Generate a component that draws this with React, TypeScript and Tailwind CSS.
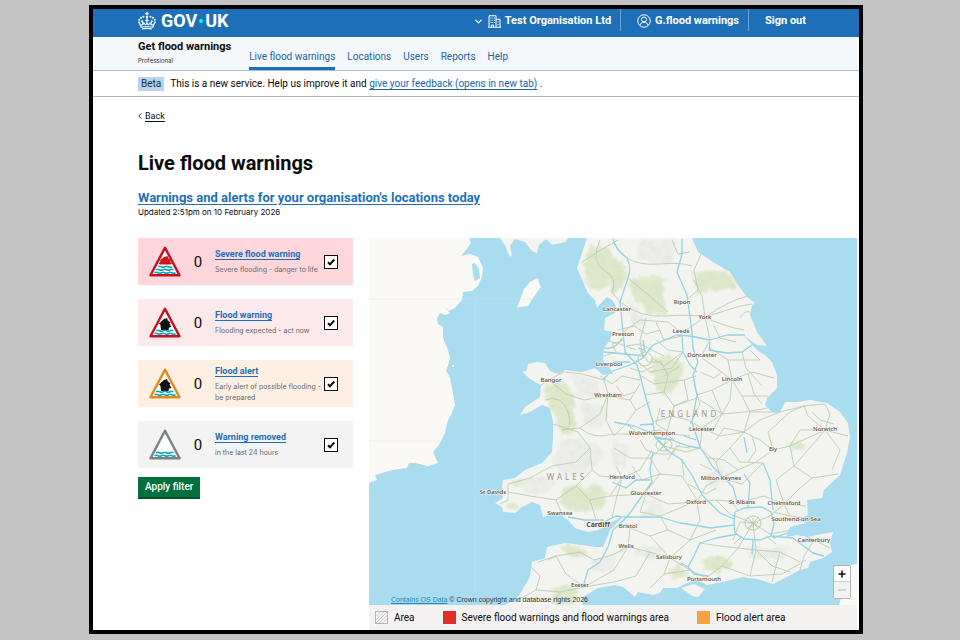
import { useState } from 'react'
import { ChevronDown, ChevronLeft } from 'lucide-react'

type Level = 'severe' | 'warning' | 'alert' | 'removed'

interface WarningType {
  id: Level
  title: string
  description: string
  count: number
  background: string
}

const warningTypes: WarningType[] = [
  { id: 'severe', title: 'Severe flood warning', description: 'Severe flooding - danger to life', count: 0, background: 'bg-[#ffd6dc]' },
  { id: 'warning', title: 'Flood warning', description: 'Flooding expected - act now', count: 0, background: 'bg-[#fce9eb]' },
  { id: 'alert', title: 'Flood alert', description: 'Early alert of possible flooding - be prepared', count: 0, background: 'bg-[#fdf0e2]' },
  { id: 'removed', title: 'Warning removed', description: 'in the last 24 hours', count: 0, background: 'bg-[#f3f3f3]' },
]

const navItems = ['Live flood warnings', 'Locations', 'Users', 'Reports', 'Help']

const places: [string, number, number][] = [
  ['Lancaster', 617, 311],
  ['Ripon', 682, 304],
  ['York', 705, 319],
  ['Preston', 623, 336],
  ['Leeds', 681, 333],
  ['Liverpool', 609, 366],
  ['Doncaster', 702, 357],
  ['Bangor', 551, 382],
  ['Wrexham', 608, 397],
  ['Lincoln', 732, 381],
  ['Wolverhampton', 652, 435],
  ['Leicester', 702, 431],
  ['Norwich', 825, 431],
  ['Ely', 773, 451],
  ['Hereford', 622, 479],
  ['Milton Keynes', 721, 480],
  ['St Davids', 493, 494],
  ['Gloucester', 646, 495],
  ['Oxford', 696, 504],
  ['St Albans', 742, 504],
  ['Chelmsford', 784, 505],
  ['Swansea', 560, 515],
  ['Bristol', 628, 528],
  ['Southend-on-Sea', 796, 521],
  ['Canterbury', 814, 542],
  ['Wells', 626, 548],
  ['Salisbury', 669, 559],
  ['Exeter', 580, 587],
  ['Portsmouth', 704, 581],
]

const mainland =
  'M587 238L582 253L577 268L583 282L588 293L595 300L597 308L602 302L607 297L612 300L616 306L615 313L605 318L604 330L612 332L610 340L604 348L603 360L610 368L613 374L603 375L595 368L582 372L565 370L560 374L555 373L550 371L545 363L537 362L528 364L527 370L523 372L529 378L535 382L541 385L540 397L525 407L520 415L530 412L542 405L550 408L553 422L553 437L552 452L542 463L525 470L515 478L503 480L502 490L503 498L495 503L502 507L503 512L515 513L522 507L532 502L540 505L543 517L558 513L568 520L575 528L588 532L598 530L612 522L625 515L617 523L610 530L607 538L603 547L596 547L582 545L565 543L547 547L545 558L532 562L530 577L518 597L505 605L582 605L583 597L598 588L615 585L623 587L635 597L638 592L653 595L660 593L663 588L677 588L687 583L697 580L707 585L723 582L743 577L757 579L773 584L787 577L800 570L808 568L810 562L823 558L832 552L830 543L833 532L817 535L807 537L797 535L786 537L790 527L807 523L795 520L808 515L807 500L822 498L824 490L840 475L847 453L850 437L848 423L840 412L827 403L810 400L797 402L785 402L780 412L773 413L765 405L767 398L777 388L777 375L772 362L765 355L757 350L743 335L757 345L767 346L757 332L750 315L752 305L755 303L747 297L738 285L730 272L713 262L698 252L692 238Z'

const ireland =
  'M369 238H469L471 243L466 250L461 256L470 254L478 257L483 268L482 277L478 286L472 291L463 292L462 300L456 307L449 311L443 305L450 313L446 315L440 313L437 318L438 324L443 327L443 338L448 350L450 358L448 366L446 370L450 378L453 393L455 405L451 415L448 420L445 433L439 445L433 452L438 463L428 466L415 463L409 463L407 468L392 470L375 475L377 480L369 483Z'

const hills =
  'M590 248Q604 241 612 252Q616 270 608 285Q598 294 589 286Q580 268 590 248ZM610 258Q624 258 627 272Q624 292 611 293ZM630 280Q648 273 668 278Q658 286 667 314Q650 318 640 305Q630 298 630 280ZM694 272Q712 268 728 273Q741 284 736 290Q714 288 696 295ZM655 358Q672 352 683 364Q684 382 674 388Q668 398 658 392Q650 374 655 358ZM546 388Q560 378 570 387Q577 398 573 408Q581 424 570 436Q557 434 557 418Q545 404 546 388ZM562 490Q578 480 586 490Q600 480 607 494Q604 512 590 510Q574 516 560 503ZM560 546Q578 542 588 555Q576 559 568 556ZM552 588Q568 580 578 590Q578 602 570 605H552ZM701 560Q716 552 730 560Q738 568 720 571Q704 574 701 560ZM672 566Q684 562 686 576Q676 582 671 576ZM509 482L524 478L520 487ZM506 503L520 504L514 511ZM788 445Q798 434 806 447Q796 454 788 445Z'

const uplands =
  'M640 240H676L672 262Q650 270 638 254ZM628 300Q640 310 646 322L632 326ZM570 375L596 378L600 395L578 398ZM580 402Q600 398 608 416Q600 438 584 424ZM560 440Q590 436 604 450Q600 472 574 476Q548 474 556 452ZM520 480Q542 472 556 482Q550 496 526 494ZM612 440L630 446L624 466L612 464ZM650 500Q662 496 664 512L640 520ZM640 545L664 548L656 560L634 556ZM590 560L616 556L612 572L592 570ZM745 548L790 546L784 560L750 558ZM704 478L722 464L730 476L714 490Z'

const aRoads =
  'M600 240Q590 262 604 270T612 292L620 302M582 262Q600 250 618 240M627 258Q640 266 660 264T692 266M628 278Q650 296 668 312M620 302Q640 318 666 316T705 317M682 304L698 290L694 270L702 252M705 317Q730 300 748 296M705 317L740 306L752 304M705 317Q722 326 744 330M705 317L702 296L694 280M705 317L710 340L702 355M705 317L682 333L668 322L640 320L623 332M646 318L640 340L643 358M656 322L664 340L682 336M672 240L678 254L690 252M740 318Q745 310 750 312M604 340L620 344L636 350M604 356L616 352L612 344L624 340M600 376L612 384L622 376L640 380M565 372L582 374L604 380L608 394M551 382L566 394L584 400L606 396M541 385L556 376L564 372M545 400Q562 394 568 412T562 430L580 428L600 414L608 394L606 420L614 436M553 424L578 432L590 448L576 462L552 466M580 428Q594 440 612 434L640 434M590 448L592 470L600 476L622 478L640 470L652 450M552 466L530 478L508 484L508 500L500 504M508 492L530 496L556 500L576 486L592 470M556 500L562 514M576 486L590 500L596 520M590 500L610 496L622 478L616 500L612 518M610 496L646 494L640 512M636 360L650 372L672 368L683 352M640 375L654 384L684 380L696 376M645 395L664 392L674 406L697 398M653 422L672 416L688 420L702 428M650 402L636 410L630 400L608 396M630 400L640 384M636 410L626 424L640 434M614 436L626 424M664 392L668 376L660 360M656 340L668 350L683 352L664 366L652 358M674 406L668 428L664 446M684 380L688 400L674 406M697 395L712 390L732 380L728 360L710 348M732 380L752 372L774 378M732 380L716 368L702 358M732 380L742 396L768 396M732 380L730 400L722 414L702 428M712 390L722 414M728 360L760 360L750 350M742 352L746 368L762 386M742 396L750 412L744 432M722 414L744 412L768 408M750 412L780 412L804 406L825 404M702 428L720 436L744 432L760 440L773 450L790 446L825 430L848 436M702 428L700 448L686 452L664 446L652 434M664 446L650 458L630 458L614 448M650 458L660 474L646 492M660 474L682 476L697 500M682 460L684 476M697 500L680 508L660 516M646 494L668 504L697 502M697 502L706 486L721 478L738 470L756 462L773 450M697 502L700 520L690 540L670 558M697 502L716 500L742 502L764 496L784 504M721 478L716 462L700 448M716 462L730 448L744 432M721 478L742 484L763 463M730 448L740 462L763 463M744 432L760 420L780 412M773 450L768 432L790 412L804 406M790 446L794 466L812 478L838 474M794 466L776 480L784 504L806 506M794 466L808 450L825 430L840 450L832 470M825 430L830 414L825 404M825 430L808 416L804 406M790 446L800 430L825 430M784 504L798 490L812 478M784 504L790 516L806 518M773 512L790 516M753 523L730 514L716 500M753 523L738 548L722 566M753 523L756 550L750 576M753 523L770 534L792 530L814 540L830 548M753 523L770 516L784 504M753 523L740 522L733 540M738 548L756 550L780 552L800 562M780 552L776 566L772 582M756 550L772 566L790 572M814 540L804 556L800 570M722 566L750 576L782 574L806 560M722 566L706 578L690 570L670 558M700 543L720 546L738 548M670 558L650 552L628 547L612 555L594 560M670 558L664 574L650 588M650 552L636 576L614 582L584 587M628 547L614 570L584 587M670 558L650 536L630 528M650 536L668 530L690 540M628 547L630 528M660 516L668 530M664 574L690 570M690 540L716 530M594 560L580 552L556 556L538 562M584 587L566 574L556 556L548 560M584 587L560 592L536 590L518 600M536 590L540 576L530 566M552 604L560 592M640 512L660 516M708 458L724 460L738 470M700 400L722 414L712 432M690 424L700 404L694 384M616 386L624 396L634 392M660 408L656 424L672 434L690 436M668 460L676 446L690 448M632 466L642 480L660 474M616 466L622 478M716 440L724 428L744 432M748 374L754 394L762 404M664 376L680 366M618 330L634 326L646 334L660 330M626 346L640 344L652 350L664 356M630 368L642 372L654 366M640 440L646 450L658 454L672 454L680 444M646 432L660 430L674 440M738 510L730 500M766 536L776 544M742 536L734 544M688 484L706 494L716 488M700 464L712 470M752 436L756 450L748 462M812 412L820 420L834 424M640 350L648 362L660 362M700 372L714 378L722 372M714 326L720 338L736 342'

const motorways =
  'M613 239Q616 250 627 258Q632 268 628 278L620 302L623 332L625 352L637 365L640 375L645 395L653 422L655 437L665 448M682 239V254L677 272L687 295L692 332L693 348L698 362L693 375L697 395L692 422L700 447L713 467L733 487L738 505M603 380L610 372L630 365L643 358L653 345L677 335L690 336L710 340L727 335L745 335M710 342L709 350L727 353L742 352L752 345M604 348Q616 350 622 338M604 352L625 354L645 356M606 368L614 362L630 362M665 449L682 460L693 477L702 495L720 513L734 519M653 452L650 470L652 482L637 503L627 517L613 530L608 547L600 562L588 570L583 587M604 522L616 516L625 517L660 517L680 523L700 526L710 528L734 525M738 534L716 538L700 543L694 556L688 567L681 563M688 567L694 574L708 576M773 510L770 480L763 463M744 437L747 453M772 536L793 538L813 553L824 556M753 540L752 554M748 507L750 483L744 474M682 335L683 352L690 365L697 372M638 348L645 350M643 340L645 352M568 517L585 520L604 520M612 482L626 488L636 480L650 480M655 437L672 440L688 446L700 448M640 425L654 424M614 422L634 426L654 434M684 436L696 440M770 534L774 538L790 532M735 512L744 508L762 507L771 512L774 524L771 536L760 540L744 539L735 533L734 522Z'

function FloodMap() {
  return (
    <svg viewBox="369 238 488 367" className="block h-auto w-full bg-[#a9dcef] font-['Noto_Sans',sans-serif]" role="img" aria-label="Map of flood warnings in England">
      <defs>
        <filter id="terrain" x="-5%" y="-5%" width="110%" height="110%">
          <feTurbulence type="fractalNoise" baseFrequency="0.18" numOctaves="3" seed="4" result="noise" />
          <feDisplacementMap in="SourceGraphic" in2="noise" scale="11" xChannelSelector="R" yChannelSelector="G" result="rough" />
          <feGaussianBlur in="rough" stdDeviation="0.9" />
        </filter>
        <filter id="relief">
          <feTurbulence type="fractalNoise" baseFrequency="0.13" numOctaves="3" seed="9" />
          <feColorMatrix values="0 0 0 0 0.55  0 0 0 0 0.6  0 0 0 0 0.5  0 1.6 0 0 -0.72" />
        </filter>
        <clipPath id="land">
          <path d={mainland} />
        </clipPath>
        <clipPath id="high-ground">
          <path d={hills + uplands} />
        </clipPath>
      </defs>

      <g fill="#faf9f5">
        <path d={ireland} />
        <path d="M538 278L539 283L541 287L535 295L528 306L520 307L517 308L521 297L524 289L530 282Z" />
        <path d="M839 605L841 598L850 565L857 564V605Z" />
        <circle cx="453" cy="366" r="1" />
      </g>
      <path d="M472 264L475 263L479 269L480 278L475 281L473 275Z" fill="#a9dcef" />
      <g fill="#f3f4ef">
        <path d="M500 238L506 247L508 253L510 257L512 255L510 246L515 239L525 242L532 251L537 253L539 245L546 239L552 245L565 242L568 238Z" />
        <path d={mainland} />
        <path d="M681 588L694 584L705 589L698 597L692 596Z" />
      </g>

      <g clipPath="url(#land)">
        <path d={uplands} fill="#ecede8" filter="url(#terrain)" />
        <path d={hills} fill="#dfe9ca" filter="url(#terrain)" />
        <g clipPath="url(#high-ground)">
          <rect x="369" y="238" width="488" height="367" filter="url(#relief)" opacity="0.3" />
        </g>
        <path d={aRoads} fill="none" stroke="#bccdb3" strokeWidth="0.9" strokeLinejoin="round" />
        <path
          d="M745 523a8 7 0 1 0 16 0a8 7 0 1 0 -16 0M749 523h9M753 518v10M747 517l12 12M759 517l-12 12M638 359a7 7 0 1 0 14 0a7 7 0 1 0 -14 0M656 445a8 6 0 1 0 16 0a8 6 0 1 0 -16 0M660 441l8 9M668 441l-8 9"
          fill="none"
          stroke="#b5ccaa"
          strokeWidth="0.9"
        />
        <path d={motorways} fill="none" stroke="#93d3e4" strokeWidth="1.3" strokeLinejoin="round" />
      </g>

      <path d="M369 299H540M369 441H445M475 292V605" stroke="#d5dad3" strokeWidth="0.5" opacity="0.7" />

      <g fill="#9c958e" fontSize="8" textAnchor="middle" className="tracking-[3px]">
        <text x="690" y="417">ENGLAND</text>
        <text x="567" y="480">WALES</text>
      </g>
      <g fill="#5e4a3c" stroke="#f7f7f2" strokeWidth="1" paintOrder="stroke" fontSize="6" fontWeight="500" textAnchor="middle">
        {places.map(([name, x, y]) => (
          <text key={name} x={x} y={y}>{name}</text>
        ))}
        <text x="598" y="527" fontSize="7" fontWeight="700">Cardiff</text>
      </g>
    </svg>
  )
}

function Crown() {
  return (
    <svg viewBox="0 0 36 36" className="h-[18px] w-[18px]" fill="#fff" aria-hidden="true">
      <path d="M16.800 0h2.400v2.300h2.500v2.400h-2.500V7h-2.400V4.700h-2.500V2.300h2.500z" />
      <circle cx="18" cy="10" r="2.400" />
      <circle cx="11" cy="9.500" r="2" />
      <circle cx="25" cy="9.500" r="2" />
      <circle cx="6" cy="11.500" r="2" />
      <circle cx="30" cy="11.500" r="2" />
      <circle cx="2.500" cy="15.500" r="2" />
      <circle cx="33.500" cy="15.500" r="2" />
      <circle cx="2" cy="20.500" r="1.800" />
      <circle cx="34" cy="20.500" r="1.800" />
      <g fill="none" stroke="#fff" strokeWidth="2.400">
        <path d="M3 22l4 9.500M33 22l-4 9.500M18 12v12M8 17l2.500 7M28 17l-2.500 7" />
        <path d="M5.500 25.500q4 1.500 6.500-3q3 4.500 6 .5q3 4 6-.5q2.500 4.500 6.500 3" />
        <path d="M14.500 17h7M6 18.500h4.500M25.500 18.500H30" />
        <path d="M7 30.500q11-3 22 0M8 34q10-2.500 20 0" />
      </g>
    </svg>
  )
}

function Building() {
  return (
    <svg viewBox="0 0 26 26" className="h-[13px] w-[13px]" fill="none" stroke="#fff" strokeWidth="2" aria-hidden="true">
      <path d="M2 24.500V1.500h14v23M16 8.500h8v16M0 24.500h26M7 24v-4h4v4" />
      <path d="M5 6h2M9 6h1.500M12 6h2M5 10.500h2M9 10.500h1.500M12 10.500h2M5 15h2M9 15h1.500M12 15h2M20 13v2M20 18v2" />
    </svg>
  )
}

function UserBadge() {
  return (
    <svg viewBox="0 0 28 28" className="h-[14px] w-[14px]" fill="none" stroke="#fff" strokeWidth="2" aria-hidden="true">
      <circle cx="14" cy="14" r="12.500" />
      <circle cx="14" cy="11" r="5" />
      <path d="M6 23c1-4.500 4-6.500 8-6.500s7 2 8 6.500" />
    </svg>
  )
}

const outlines: Record<Level, string> = {
  severe: '#c1121f',
  warning: '#c1121f',
  alert: '#e08a1e',
  removed: '#7b8186',
}

function WarningIcon({ level }: { level: Level }) {
  return (
    <svg viewBox="0 0 64 62" className="h-[31px] w-8" aria-hidden="true">
      <path d="M32 3.500L61 58.500H3z" fill="#fff" stroke={outlines[level]} strokeWidth="5" strokeLinejoin="round" />
      {level === 'severe' && (
        <path d="M19 35l4-4-1-3 10-7 2 1 1-2 3 1v3l6 5-2 2 4 4-3 2H22z" fill="#d2101e" />
      )}
      {(level === 'warning' || level === 'alert') && (
        <path d="M20 33l11-10 2 1 1-2 3 1v3l6 5-2 2 4 7-5 1-1 5H24l-1-10z" fill="#111" />
      )}
      {level === 'severe' && (
        <path d="M18 41.500q3.500-2 7 0t7 0t7 0t7 0" fill="none" stroke="#12a5b8" strokeWidth="3" />
      )}
      <path d="M14 47.500q3.500-2 7 0t7 0t7 0t7 0t7 0M11 53.500q3.500-2 7 0t7 0t7 0t7 0t7 0t7 0" fill="none" stroke="#12a5b8" strokeWidth="3.400" />
    </svg>
  )
}

function WarningCard({ item, checked, onChange }: { item: WarningType; checked: boolean; onChange: () => void }) {
  return (
    <div className={`flex min-h-[47px] items-center pr-[15px] pl-[11px] ${item.background}`}>
      <WarningIcon level={item.id} />
      <span className="w-[34px] text-center text-[15px] leading-5">{item.count}</span>
      <div className="min-w-0 flex-1 pt-px">
        <a href="#" className="block w-fit border-b border-[#1d70b8] text-[9px] leading-[10px] font-bold text-[#1d70b8]">
          {item.title}
        </a>
        <p className="mt-1 font-['Inter',sans-serif] text-[7px] leading-[11px] text-[#6b6b6b]">{item.description}</p>
      </div>
      <div className="relative h-[14px] w-[14px] shrink-0">
        <input
          type="checkbox"
          aria-label={item.title}
          checked={checked}
          onChange={onChange}
          className="block h-[14px] w-[14px] appearance-none border border-[#0b0c0c] bg-white"
        />
        {checked && (
          <svg viewBox="0 0 14 14" className="pointer-events-none absolute inset-0" fill="none" stroke="#0b0c0c" strokeWidth="2">
            <path d="M4 7.200L6 9.200L10.300 4.500" />
          </svg>
        )}
      </div>
    </div>
  )
}

export default function App() {
  const [selected, setSelected] = useState<Level[]>(['severe', 'warning', 'alert', 'removed'])

  const toggle = (id: Level) =>
    setSelected((current) => (current.includes(id) ? current.filter((level) => level !== id) : [...current, id]))

  return (
    <div className="min-h-screen bg-[#c4c4c4] pt-[5px] pr-[97px] pb-[6px] pl-[89px] font-['Roboto',sans-serif] text-[#0b0c0c]">
      <div className="border-4 border-black bg-white">
        {/* Header */}
        <header className="flex h-7 items-start justify-between bg-[#1d70b8] pr-[53px] pl-[45px] text-white">
          <a href="#" className="flex items-center gap-[5px] text-[18px] leading-6 font-bold">
            <Crown />
            <span className="flex items-center gap-[2px]">
              GOV
              <span className="h-1 w-1 rounded-full bg-[#00ffe0]" />
              UK
            </span>
          </a>
          <div className="flex text-[11px] font-bold">
            <button type="button" className="flex h-[22px] items-center gap-1 border-r border-[#6ea4d3] pt-[2px] pr-[9px]">
              <ChevronDown className="h-[11px] w-[11px]" strokeWidth={3} />
              <Building />
              Test Organisation Ltd
            </button>
            <a href="#" className="flex h-[22px] items-center gap-1 border-r border-[#6ea4d3] pt-[2px] pr-[9px] pl-4">
              <UserBadge />
              G.flood warnings
            </a>
            <a href="#" className="flex h-[22px] items-center pt-[2px] pl-4">Sign out</a>
          </div>
        </header>

        {/* Service navigation */}
        <div className="flex h-[34px] gap-[18px] border-b border-[#a3bfd6] bg-[#f4f8fb] pl-[45px]">
          <div className="pt-[3px]">
            <p className="text-[11px] leading-[14px] font-bold">Get flood warnings</p>
            <p className="pt-px font-['Inter',sans-serif] text-[6px] leading-3 text-[#333]">Professional</p>
          </div>
          <nav className="flex gap-3 text-[10px] text-[#1a65a6]">
            {navItems.map((item, index) => (
              <a
                key={item}
                href="#"
                className={`pt-3 leading-4 ${index === 0 ? 'border-b-[3px] border-[#1d70b8]' : ''}`}
              >
                {item}
              </a>
            ))}
          </nav>
        </div>

        {/* Phase banner */}
        <div className="flex h-[26px] items-center gap-[6px] border-b border-[#b1b4b6] pl-[45px] text-[10px]">
          <span className="bg-[#bbd4ea] px-[3px] leading-[14px] text-[#0c2d4a]">Beta</span>
          <p>
            This is a new service. Help us improve it and{' '}
            <a href="#" className="text-[#1a65a6] underline underline-offset-2">give your feedback (opens in new tab)</a> .
          </p>
        </div>

        <main className="pr-[2px] pl-[45px]">
          <a href="#" className="mt-3 flex w-fit items-center text-[9px] leading-[14px]">
            <ChevronLeft className="-ml-[3px] h-[10px] w-[10px]" />
            <span className="underline underline-offset-2">Back</span>
          </a>
          <h1 className="mt-7 text-[20px] leading-6 font-bold">Live flood warnings</h1>
          <h2 className="mt-[15px] text-[13px] leading-4 font-bold">
            <a href="#" className="text-[#1d70b8] underline underline-offset-2">
              Warnings and alerts for your organisation's locations today
            </a>
          </h2>
          <p className="font-['Inter',sans-serif] text-[8px] leading-3">Updated 2:51pm on 10 February 2026</p>

          <div className="mt-5 flex gap-4">
            <form className="w-[215px] shrink-0" onSubmit={(event) => event.preventDefault()}>
              <div className="space-y-[14px]">
                {warningTypes.map((item) => (
                  <WarningCard key={item.id} item={item} checked={selected.includes(item.id)} onChange={() => toggle(item.id)} />
                ))}
              </div>
              <button type="submit" className="mt-[9px] block border-b-2 border-[#00532c] bg-[#00703c] px-[7px] text-[10px] leading-5 font-medium text-white">
                Apply filter
              </button>
            </form>

            <section className="min-w-0 flex-1">
              <div className="relative">
                <FloodMap />
                <p className="absolute bottom-0 left-[22px] font-['Liberation_Sans',sans-serif] text-[7px] leading-[10px] text-[#333]">
                  <a href="#" className="text-[#1a8ab5] underline">Contains OS Data</a> © Crown copyright and database rights 2026
                </p>
                <div className="absolute right-[6px] bottom-[6px] flex w-[18px] flex-col rounded-xs border border-[#b1b4b6] bg-white">
                  <button type="button" aria-label="Zoom in" className="flex h-4 items-center justify-center border-b border-[#c8cacb]">
                    <svg viewBox="0 0 8 8" className="h-2 w-2" stroke="#0b0c0c" strokeWidth="1.500"><path d="M4 0.500v7M0.500 4h7" /></svg>
                  </button>
                  <button type="button" aria-label="Zoom out" disabled className="flex h-4 items-center justify-center bg-[#f3f2f1]">
                    <svg viewBox="0 0 8 8" className="h-2 w-2" stroke="#b1b4b6"><path d="M0 4h8" /></svg>
                  </button>
                </div>
              </div>
              <ul className="flex h-[25px] items-center gap-7 bg-[#f3f2f1] pl-[6px] text-[10px]">
                <li className="flex items-center gap-[6px]">
                  <svg viewBox="0 0 13 13" className="h-[13px] w-[13px] border border-[#b1b4b6] bg-white" stroke="#9a9c9e" strokeWidth="0.800">
                    <path d="M0 5L5 0M0 9L9 0M0 13L13 0M4 13L13 4M8 13L13 8" />
                  </svg>
                  Area
                </li>
                <li className="flex items-center gap-[6px]">
                  <span className="h-[13px] w-[13px] bg-[#e12d27]" />
                  Severe flood warnings and flood warnings area
                </li>
                <li className="flex items-center gap-[6px]">
                  <span className="h-[13px] w-[13px] bg-[#fa9f42]" />
                  Flood alert area
                </li>
              </ul>
            </section>
          </div>
        </main>
      </div>
    </div>
  )
}
